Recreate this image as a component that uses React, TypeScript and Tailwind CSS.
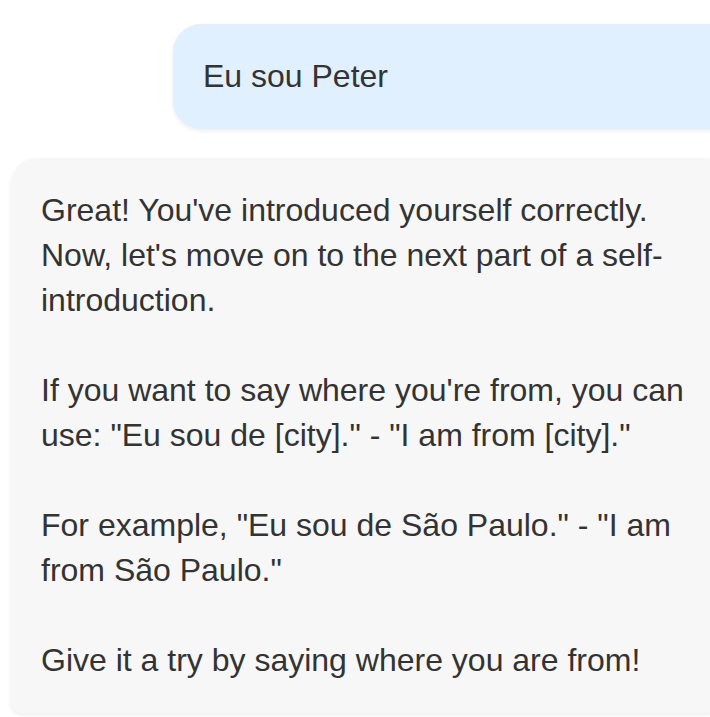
const reply = `Great! You've introduced yourself correctly. Now, let's move on to the next part of a self-introduction.

If you want to say where you're from, you can use: "Eu sou de [city]." - "I am from [city]."

For example, "Eu sou de São Paulo." - "I am from São Paulo."

Give it a try by saying where you are from!`;

export default function App() {
  return (
    <div className="w-[710px] h-[717px] overflow-hidden bg-white font-['Liberation_Sans',Arial,sans-serif] text-[#333333]">
      <div className="w-[720px] ml-[11px] pt-[24px] flex flex-col gap-[29px]">
        {/* user message */}
        <div className="self-end w-[558px] bg-[#e1f0fe] rounded-l-[28px] rounded-r-[10px] px-[30px] py-[30px] text-[32px] leading-[45px] shadow-[0_2px_4px_rgba(0,0,0,0.07)]">
          Eu sou Peter
        </div>

        {/* assistant message */}
        <div className="bg-[#f7f7f7] rounded-[26px] rounded-bl-[10px] px-[30px] py-[30px] text-[32px] leading-[45px] whitespace-pre-wrap shadow-[0_2px_4px_rgba(0,0,0,0.07)]">
          {reply}
        </div>
      </div>
    </div>
  );
}
